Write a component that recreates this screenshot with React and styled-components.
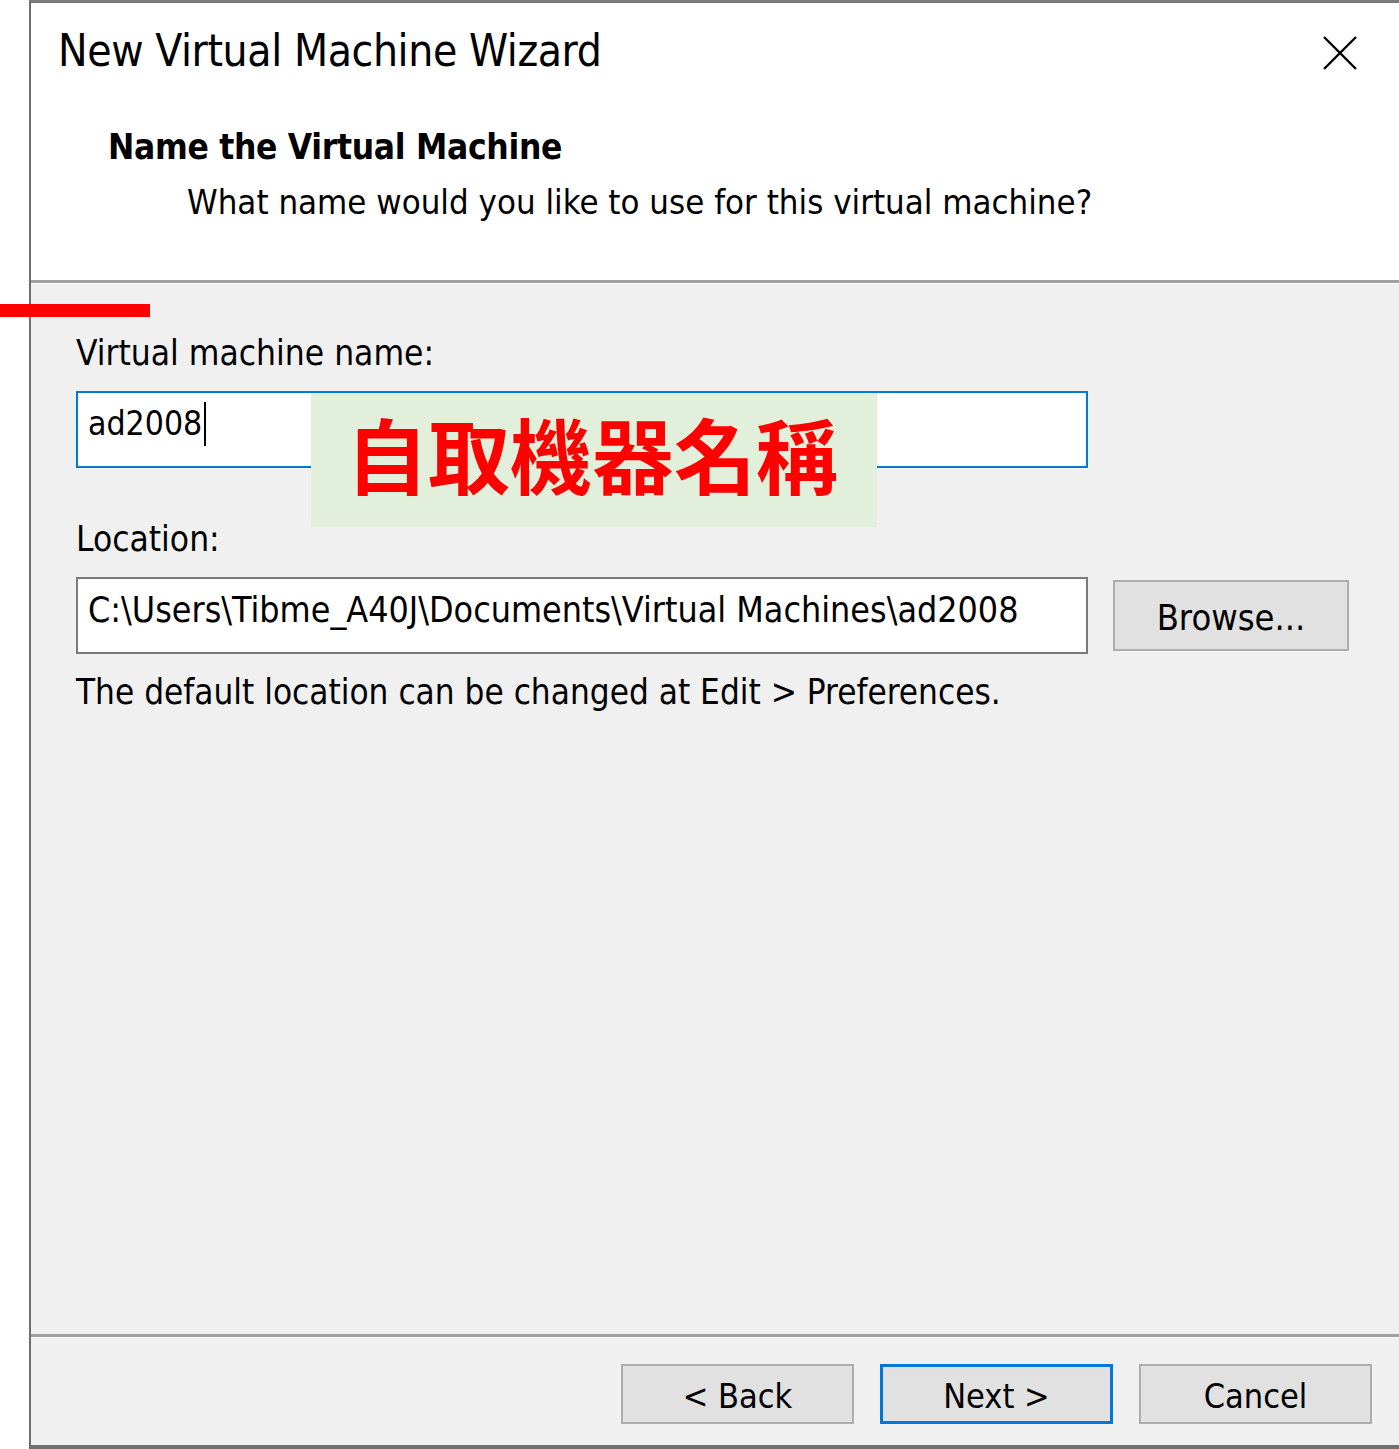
import React from 'react';
import styled, { createGlobalStyle } from 'styled-components';

const GlobalStyle = createGlobalStyle`
  html, body {
    margin: 0;
    padding: 0;
    background: #ffffff;
  }
  body {
    font-family: "DejaVu Sans", "Liberation Sans", sans-serif;
    font-stretch: condensed;
    color: #000;
  }
`;

const Page = styled.div`
  position: relative;
  width: 1399px;
  height: 1449px;
  display: flex;
  overflow: hidden;
`;

const Gutter = styled.div`
  width: 29px;
  flex: none;
  background: #fff;
`;

const Window = styled.div`
  flex: 1;
  display: flex;
  flex-direction: column;
  box-sizing: border-box;
  border-left: 2px solid #6e6e6e;
  border-top: 3px solid #7a7a7a;
  border-bottom: 4px solid #707070;
  background: #f0f0f0;
`;

const Header = styled.div`
  height: 280px;
  flex: none;
  background: #fff;
  box-sizing: border-box;
  padding: 26px 41px 0 27px;
  border-bottom: 3px solid #a0a0a0;
`;

const TitleRow = styled.div`
  display: flex;
  justify-content: space-between;
  align-items: flex-start;
`;

const Title = styled.div`
  font-size: 44px;
  line-height: 1;
  font-weight: 400;
  letter-spacing: -0.4px;
`;

const CloseBtn = styled.div`
  width: 36px;
  height: 36px;
  margin-top: 6px;
  display: flex;
  align-items: center;
  justify-content: center;
`;

const StepTitle = styled.div`
  margin: 57px 0 0 50px;
  font-size: 35px;
  font-weight: 700;
  line-height: 1;
  letter-spacing: -0.3px;
`;

const StepDesc = styled.div`
  margin: 20px 0 0 129px;
  font-size: 34.5px;
  line-height: 1;
`;

const Body = styled.div`
  flex: 1;
  position: relative;
  box-sizing: border-box;
  padding: 53px 0 0 45px;
  border-bottom: 3px solid #a0a0a0;
  box-shadow: inset 0 1px 0 #ffffff;
`;

const Label = styled.div`
  font-size: 35px;
  line-height: 1;
  margin-bottom: ${p => p.gap}px;
`;

const FieldRow = styled.div`
  display: flex;
  align-items: center;
  gap: 25px;
`;

const TextBox = styled.div`
  width: 1012px;
  height: 77px;
  box-sizing: border-box;
  background: #fff;
  border: 2px solid ${p => (p.focused ? '#0078d7' : '#7a7a7a')};
  padding: 11px 0 0 10px;
  font-size: ${p => p.size}px;
  line-height: 40px;
  display: flex;
  align-items: flex-start;
  white-space: nowrap;
`;

const Caret = styled.span`
  display: inline-block;
  width: 2px;
  height: 44px;
  margin: -2px 0 0 2px;
  background: #000;
`;

const Button = styled.div`
  width: ${p => p.w}px;
  height: ${p => p.h}px;
  box-sizing: border-box;
  background: #e1e1e1;
  border: ${p => (p.primary ? '3px solid #0078d7' : '2px solid #adadad')};
  display: flex;
  align-items: center;
  justify-content: center;
  font-size: ${p => p.size}px;
  line-height: 1;
  padding-top: 4px;
`;

const Note = styled.div`
  margin-top: 21px;
  font-size: 34.8px;
  line-height: 1;
`;

const Footer = styled.div`
  height: 108px;
  flex: none;
  box-sizing: border-box;
  border-top: 1px solid #ffffff;
  display: flex;
  justify-content: flex-end;
  align-items: flex-start;
  gap: 26px;
  padding: 26px 27px 0 0;
`;

const Spacer = styled.div`
  height: ${p => p.h}px;
`;

/* annotations drawn over the screenshot */
const RedMark = styled.div`
  position: absolute;
  left: 0;
  top: 304px;
  width: 150px;
  height: 13px;
  background: #ff0000;
`;

const Callout = styled.div`
  position: absolute;
  left: 311px;
  top: 393px;
  width: 566px;
  height: 134px;
  background: #e2efda;
  color: #ff0000;
  font-family: "Noto Sans CJK TC", "Noto Sans CJK SC", sans-serif;
  font-stretch: normal;
  font-weight: 700;
  font-size: 82px;
  line-height: 1;
  display: flex;
  align-items: center;
  justify-content: center;
  padding: 0 4px 14px 0;
  box-sizing: border-box;
`;

const CloseIcon = () => (
  <svg width="36" height="36" viewBox="0 0 36 36">
    <path d="M2 2 L34 34 M34 2 L2 34" stroke="#000" strokeWidth="2.4" fill="none" />
  </svg>
);

export default function App() {
  return (
    <>
      <GlobalStyle />
      <Page>
        <Gutter />
        <Window>
          <Header>
            <TitleRow>
              <Title>New Virtual Machine Wizard</Title>
              <CloseBtn>
                <CloseIcon />
              </CloseBtn>
            </TitleRow>
            <StepTitle>Name the Virtual Machine</StepTitle>
            <StepDesc>What name would you like to use for this virtual machine?</StepDesc>
          </Header>
          <Body>
            <Label gap={20}>Virtual machine name:</Label>
            <TextBox focused size={33.5}>
              ad2008<Caret />
            </TextBox>
            <Spacer h={54} />
            <Label gap={20}>Location:</Label>
            <FieldRow>
              <TextBox size={35.5}>C:\Users\Tibme_A40J\Documents\Virtual Machines\ad2008</TextBox>
              <Button w={236} h={71} size={36}>Browse...</Button>
            </FieldRow>
            <Note>The default location can be changed at Edit &gt; Preferences.</Note>
          </Body>
          <Footer>
            <Button w={233} h={60} size={34}>&lt; Back</Button>
            <Button w={233} h={60} size={34} primary>Next &gt;</Button>
            <Button w={233} h={60} size={34}>Cancel</Button>
          </Footer>
        </Window>
        <RedMark />
        <Callout>自取機器名稱</Callout>
      </Page>
    </>
  );
}
